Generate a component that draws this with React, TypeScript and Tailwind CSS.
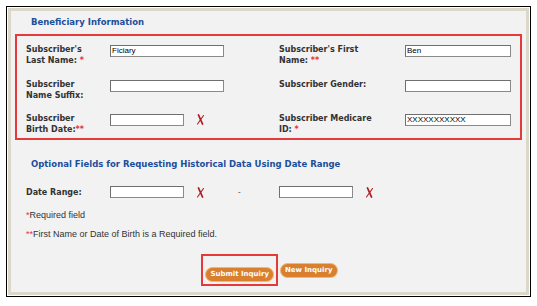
import React from "react";

const label = "font-['DejaVu_Sans',sans-serif] text-[8px] leading-[11px] font-bold text-[#333]";
const star = "text-[#e8313a]";

function Field({ value = "", w = "w-[114px]" }: { value?: string; w?: string }) {
  return (
    <div
      className={`${w} h-[12px] bg-white border border-[#8a8a8a] border-t-[#6f6f6f] border-l-[#6f6f6f] pl-[1px] font-['Liberation_Sans',sans-serif] text-[8px] leading-[10px] text-black`}
    >
      {value}
    </div>
  );
}

function Cross() {
  return (
    <svg width="9" height="11" viewBox="0 0 9 11" className="shrink-0">
      <path d="M2.5 1 L6.5 10" stroke="#b01c22" strokeWidth="1.8" strokeLinecap="round" />
      <path d="M7.5 1.5 L1.5 10" stroke="#b01c22" strokeWidth="1.1" strokeLinecap="round" />
    </svg>
  );
}

function Button({ text }: { text: string }) {
  return (
    <button className="h-[15px] px-[4px] rounded-full bg-[#d9802f] border border-[#f0b878] text-white font-['DejaVu_Sans',sans-serif] font-bold text-[7px] leading-[13px] whitespace-nowrap">
      {text}
    </button>
  );
}

export default function App() {
  return (
    <div className="w-[537px] h-[306px] bg-white pl-[6px] pt-[6px]">
      <div className="w-[525px] h-[291px] border border-black p-[1px] bg-white">
        <div className="h-full border-[3px] border-[#dbd8ca] bg-[#f2f2f2] px-[4px] pt-[5px]">
          <h2 className="pl-[16px] font-['DejaVu_Sans',sans-serif] font-bold text-[8.5px] leading-[12px] text-[#1b4e9b]">
            Beneficiary Information
          </h2>

          <div className="mt-[6px] h-[106px] border-2 border-[#e53a3a] pl-[9px] pt-[8px]">
            <div className="grid grid-cols-[84px_169px_126px_1fr] auto-rows-[22px] gap-y-[12.5px]">
              <div className={label}>
                Subscriber's
                <br />
                Last Name: <span className={star}>*</span>
              </div>
              <div className="pt-[1px]">
                <Field value="Ficiary" />
              </div>
              <div className={label}>
                Subscriber's First
                <br />
                Name: <span className={star}>**</span>
              </div>
              <div className="pt-[1px]">
                <Field value="Ben" w="w-[106px]" />
              </div>

              <div className={label}>
                Subscriber
                <br />
                Name Suffix:
              </div>
              <div className="pt-[1px]">
                <Field />
              </div>
              <div className={label}>Subscriber Gender:</div>
              <div className="pt-[1px]">
                <Field w="w-[106px]" />
              </div>

              <div className={label}>
                Subscriber
                <br />
                Birth Date:<span className={star}>**</span>
              </div>
              <div className="pt-[1px] flex items-start gap-[12px]">
                <Field w="w-[74px]" />
                <Cross />
              </div>
              <div className={label}>
                Subscriber Medicare
                <br />
                ID: <span className={star}>*</span>
              </div>
              <div className="pt-[1px]">
                <Field value="XXXXXXXXXXX" w="w-[106px]" />
              </div>
            </div>
          </div>

          <h2 className="mt-[18px] pl-[16px] font-['DejaVu_Sans',sans-serif] font-bold text-[8.5px] leading-[12px] text-[#1b4e9b]">
            Optional Fields for Requesting Historical Data Using Date Range
          </h2>

          <div className="mt-[16px] pl-[11px] flex items-center">
            <div className={`${label} w-[84px]`}>Date Range:</div>
            <Field w="w-[74px]" />
            <div className="ml-[12px]">
              <Cross />
            </div>
            <div className="ml-[33px] w-[41px] font-['Liberation_Sans',sans-serif] text-[8px] text-[#333]">-</div>
            <Field w="w-[74px]" />
            <div className="ml-[12px]">
              <Cross />
            </div>
          </div>

          <div className="mt-[12px] pl-[11px] font-['Liberation_Sans',sans-serif] text-[9px] leading-[11px] text-[#333]">
            <p>
              <span className={star}>*</span>Required field
            </p>
            <p className="mt-[8px]">
              <span className={star}>**</span>First Name or Date of Birth is a Required field.
            </p>
          </div>

          <div className="mt-[14px] flex justify-center items-center gap-[2px] pl-[2px]">
            <div className="border-2 border-[#e53a3a] px-[2px] py-[2px]">
              <Button text="Submit Inquiry" />
            </div>
            <Button text="New Inquiry" />
          </div>
        </div>
      </div>
    </div>
  );
}
